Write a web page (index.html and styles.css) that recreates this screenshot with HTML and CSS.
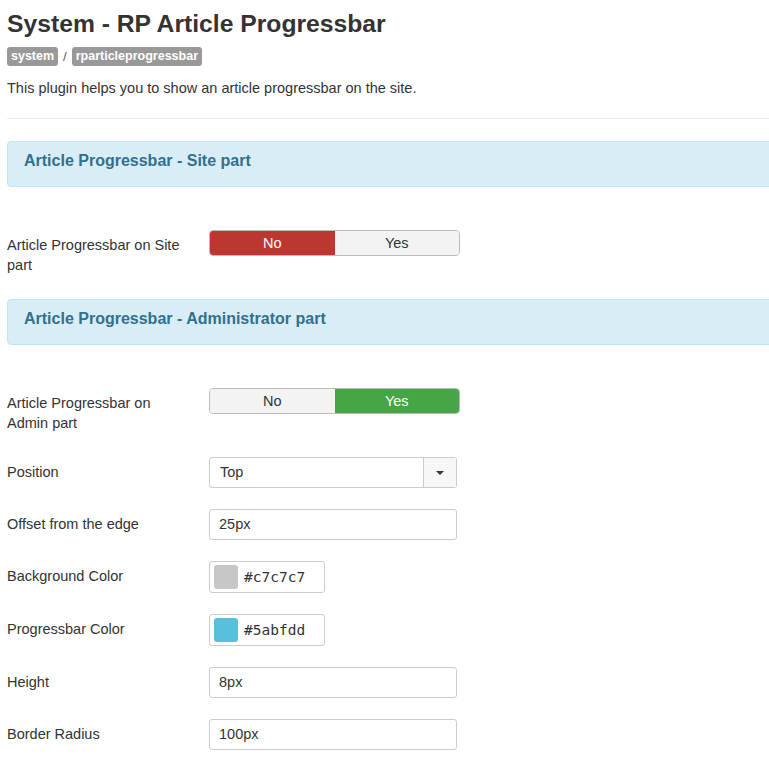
FILE: index.html
```html
<!DOCTYPE html>
<html>
<head>
<meta charset="utf-8">
<link rel="stylesheet" href="styles.css">
</head>
<body>
<div class="page">
  <h1 class="title">System - RP Article Progressbar</h1>
  <div class="badges">
    <span class="badge">system</span>
    <span class="sep">/</span>
    <span class="badge">rparticleprogressbar</span>
  </div>
  <p class="desc">This plugin helps you to show an article progressbar on the site.</p>
  <hr class="rule">

  <div class="alert"><h4>Article Progressbar - Site part</h4></div>

  <div class="group group-first">
    <div class="label">Article Progressbar on Site part</div>
    <div class="toggle">
      <span class="opt opt-no-on">No</span>
      <span class="opt">Yes</span>
    </div>
  </div>

  <div class="alert"><h4>Article Progressbar - Administrator part</h4></div>

  <div class="group group-first">
    <div class="label">Article Progressbar on Admin part</div>
    <div class="toggle">
      <span class="opt">No</span>
      <span class="opt opt-yes-on">Yes</span>
    </div>
  </div>

  <div class="group">
    <div class="label">Position</div>
    <div class="select">
      <span class="select-val">Top</span>
      <span class="select-arrow"><span class="caret"></span></span>
    </div>
  </div>

  <div class="group">
    <div class="label">Offset from the edge</div>
    <div class="input">25px</div>
  </div>

  <div class="group">
    <div class="label">Background Color</div>
    <div class="color">
      <span class="swatch swatch-grey"></span>
      <span class="hex">#c7c7c7</span>
    </div>
  </div>

  <div class="group">
    <div class="label">Progressbar Color</div>
    <div class="color">
      <span class="swatch swatch-blue"></span>
      <span class="hex">#5abfdd</span>
    </div>
  </div>

  <div class="group">
    <div class="label">Height</div>
    <div class="input">8px</div>
  </div>

  <div class="group">
    <div class="label">Border Radius</div>
    <div class="input">100px</div>
  </div>
</div>
</body>
</html>
```

FILE: styles.css
```css
html, body {
  margin: 0;
  padding: 0;
  background: #fff;
  overflow: hidden;
}
body {
  font-family: "Liberation Sans", Arial, sans-serif;
  font-size: 14.5px;
  line-height: 20px;
  color: #333;
}
.page {
  padding: 0 0 0 7px;
}
.title {
  margin: 0;
  padding-top: 8px;
  font-size: 24.7px;
  line-height: 32px;
  font-weight: bold;
  color: #333;
}
.badges {
  display: flex;
  align-items: center;
  gap: 5px;
  margin-top: 7px;
  height: 19px;
}
.badge {
  display: inline-block;
  background: #999;
  color: #fff;
  font-weight: bold;
  font-size: 12.5px;
  line-height: 19px;
  padding: 0 4px;
  border-radius: 3px;
}
.sep {
  color: #555;
  font-size: 13px;
}
.desc {
  margin: 12px 0 0 0;
  line-height: 20px;
}
.rule {
  margin: 20px 0 22px 0;
  border: 0;
  border-top: 1px solid #eee;
  width: 800px;
}
.alert {
  width: 800px;
  box-sizing: border-box;
  background: #d9edf7;
  border: 1px solid #bce8f1;
  border-radius: 4px;
  height: 46px;
  padding: 9px 16px;
}
.alert h4 {
  margin: 0;
  font-size: 16px;
  line-height: 20px;
  color: #31708f;
  font-weight: bold;
}
.group {
  display: flex;
  align-items: flex-start;
  margin-top: 21px;
}
.group-first {
  margin-top: 43px;
  margin-bottom: 24px;
}
.label {
  width: 180px;
  flex: none;
  padding-top: 5px;
  margin-right: 22px;
}
.toggle {
  display: flex;
  width: 251px;
  height: 26px;
  box-sizing: border-box;
  border: 1px solid #bbb;
  border-radius: 4px;
  overflow: hidden;
}
.opt {
  flex: 1;
  text-align: center;
  line-height: 24px;
  background: #f3f3f3;
  color: #333;
}
.opt-no-on {
  background: #bd362f;
  color: #fff;
}
.opt-yes-on {
  background: #46a546;
  color: #fff;
}
.select {
  display: flex;
  width: 248px;
  height: 31px;
  box-sizing: border-box;
  border: 1px solid #ccc;
  border-radius: 3px;
}
.select-val {
  flex: 1;
  padding-left: 10px;
  line-height: 29px;
}
.select-arrow {
  width: 32px;
  border-left: 1px solid #ccc;
  background: #f7f7f7;
  display: flex;
  align-items: center;
  justify-content: center;
}
.caret {
  width: 0;
  height: 0;
  border-left: 4px solid transparent;
  border-right: 4px solid transparent;
  border-top: 4px solid #333;
}
.input {
  width: 248px;
  height: 31px;
  box-sizing: border-box;
  border: 1px solid #ccc;
  border-radius: 3px;
  padding-left: 9px;
  line-height: 29px;
}
.color {
  display: flex;
  align-items: center;
  width: 116px;
  height: 32px;
  box-sizing: border-box;
  border: 1px solid #ccc;
  border-radius: 3px;
  padding-left: 4px;
}
.swatch {
  width: 24px;
  height: 24px;
  border-radius: 3px;
  margin-right: 6px;
}
.swatch-grey {
  background: #c7c7c7;
}
.swatch-blue {
  background: #5abfdd;
}
.hex {
  font-family: "DejaVu Sans Mono", monospace;
  font-size: 14.5px;
  color: #333;
}
```
